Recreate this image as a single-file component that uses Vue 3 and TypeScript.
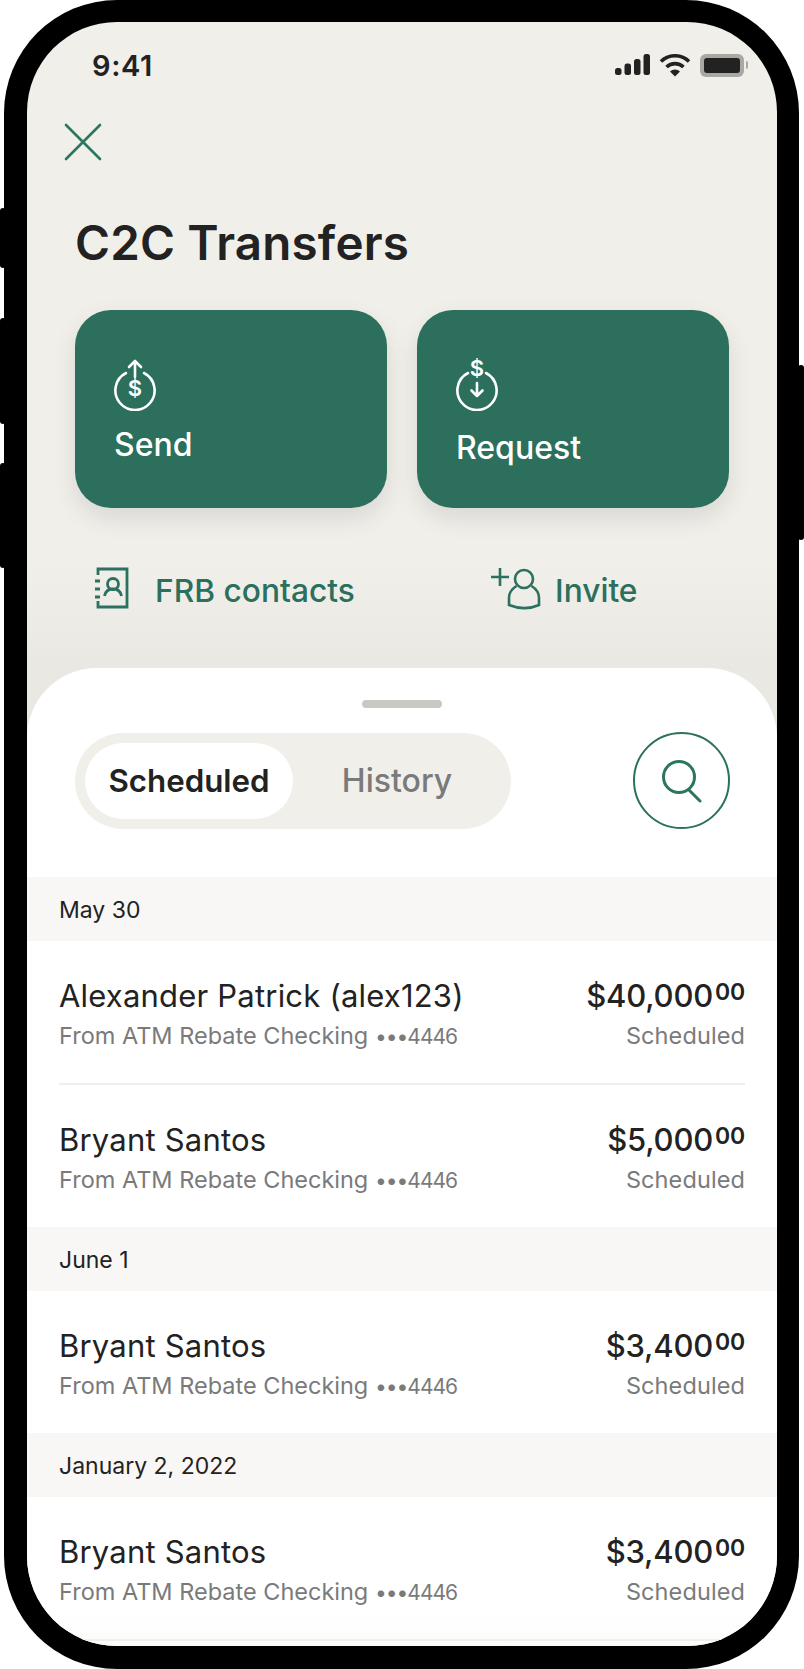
<template>
  <div class="phone">
    <i class="btn btn--mute" />
    <i class="btn btn--up" />
    <i class="btn btn--down" />
    <i class="btn btn--power" />
    <div class="screen">
      <div class="status">
        <span class="status__time">9:41</span>
        <div class="status__icons">
          <svg width="35" height="22" viewBox="0 0 35 22" fill="#222">
            <rect x="0" y="14" width="6.500" height="7" rx="2.500" />
            <rect x="9.500" y="9.500" width="6.500" height="11.500" rx="2.500" />
            <rect x="19" y="5" width="6.500" height="16" rx="2.500" />
            <rect x="28.500" y="0" width="6.500" height="21" rx="2.500" />
          </svg>
          <svg width="32" height="23" viewBox="0 0 32 23" fill="none" stroke="#222" stroke-width="3.600">
            <path d="M2 7.500a20 20 0 0 1 28 0" />
            <path d="M7.500 13a12.500 12.500 0 0 1 17 0" />
            <path d="M16 22.500l-5-5a7.200 7.200 0 0 1 10 0z" fill="#222" stroke="none" />
          </svg>
          <div class="battery"><div class="battery__fill" /></div>
        </div>
      </div>

      <svg class="close" width="38" height="38" viewBox="0 0 38 38" fill="none" stroke="#2c7560" stroke-width="2.600" stroke-linecap="round">
        <path d="M2 2l34 34M36 2L2 36" />
      </svg>

      <h1 class="title">C2C Transfers</h1>

      <div class="cards">
        <div class="card">
          <svg width="44" height="58" viewBox="0 -6 44 58" fill="none" stroke="#fff" stroke-width="2.600" stroke-linecap="round" stroke-linejoin="round">
            <path d="M13 14a19.600 19.600 0 1 0 18 0" />
            <path d="M22 2v16M16 8l6-6 6 6" />
            <text x="22" y="37" class="card__dollar">$</text>
          </svg>
          <span class="card__label card__label--send">Send</span>
        </div>
        <div class="card">
          <svg width="44" height="58" viewBox="0 -6 44 58" fill="none" stroke="#fff" stroke-width="2.600" stroke-linecap="round" stroke-linejoin="round">
            <path d="M13 14a19.600 19.600 0 1 0 18 0" />
            <path d="M22 24v13M16.500 31.500l5.500 5.500 5.500-5.500" />
            <text x="22" y="17" class="card__dollar">$</text>
          </svg>
          <span class="card__label card__label--request">Request</span>
        </div>
      </div>

      <div class="links">
        <div class="link link--contacts">
          <svg width="34" height="42" viewBox="0 0 34 42" fill="none" stroke="#2c7060" stroke-width="2.800">
            <path d="M3 8V2h29v38H3v-6" />
            <path d="M0 14h5M0 22h5M0 30h5" />
            <circle cx="18" cy="17" r="5.500" />
            <path d="M9.500 29c1-5 4-7 8.500-7s7.500 2 8.500 7" />
          </svg>
          <span>FRB contacts</span>
        </div>
        <div class="link link--invite">
          <svg width="52" height="44" viewBox="0 0 52 44" fill="none" stroke="#2c7060" stroke-width="2.600">
            <path d="M1 11h18M10 2v18" />
            <circle cx="34" cy="13" r="9" />
            <path d="M26.500 20c-5 3-7.500 7-7.500 12v7c10 4 21 4 30 0v-7c0-5-2.500-9-7.500-12" />
          </svg>
          <span>Invite</span>
        </div>
      </div>

      <div class="sheet">
        <div class="sheet__handle" />
        <div class="toolbar">
          <div class="segment">
            <span class="segment__item segment__item--active">Scheduled</span>
            <span class="segment__item">History</span>
          </div>
          <div class="search">
            <svg width="42" height="44" viewBox="0 0 42 44" fill="none" stroke="#2c7560" stroke-width="3">
              <circle cx="18" cy="18" r="15.500" />
              <path d="M28 31l11 11" stroke-linecap="round" />
            </svg>
          </div>
        </div>

        <template v-for="group in groups" :key="group.date">
          <div class="band">{{ group.date }}</div>
          <div
            v-for="row in group.rows"
            :key="row.id"
            class="row"
            :class="{ 'row--line': row.line }"
          >
            <div class="row__left">
              <div class="row__name">{{ row.name }}</div>
              <div class="row__sub">From ATM Rebate Checking <span class="row__acct">•••4446</span></div>
            </div>
            <div class="row__right">
              <div class="row__amount">{{ row.amount }}<sup>00</sup></div>
              <div class="row__sub">Scheduled</div>
            </div>
          </div>
        </template>
      </div>
      <div class="fade" />
    </div>
  </div>
</template>

<script setup lang="ts">
interface Row {
  id: number
  name: string
  amount: string
  line?: boolean
}

const groups: { date: string; rows: Row[] }[] = [
  {
    date: 'May 30',
    rows: [
      { id: 1, name: 'Alexander Patrick (alex123)', amount: '$40,000', line: true },
      { id: 2, name: 'Bryant Santos', amount: '$5,000' },
    ],
  },
  { date: 'June 1', rows: [{ id: 3, name: 'Bryant Santos', amount: '$3,400' }] },
  {
    date: 'January 2, 2022',
    rows: [{ id: 4, name: 'Bryant Santos', amount: '$3,400', line: true }],
  },
]
</script>

<style>
html,
body {
  margin: 0;
  background: #fff;
}
</style>

<style scoped>
.phone {
  position: relative;
  box-sizing: border-box;
  width: 795px;
  height: 1669px;
  margin-left: 4px;
  padding: 22px 22px 23px 23px;
  background: #000;
  border-radius: 113px;
  font-family: Inter, 'Liberation Sans', sans-serif;
  color: #222;
}

.btn {
  position: absolute;
  width: 6px;
  background: #000;
  border-radius: 4px;
}
.btn--mute { left: -4px; top: 208px; height: 60px; }
.btn--up { left: -4px; top: 318px; height: 106px; }
.btn--down { left: -4px; top: 463px; height: 105px; }
.btn--power { right: -5px; top: 365px; height: 175px; }

.screen {
  position: relative;
  display: flex;
  flex-direction: column;
  height: 100%;
  overflow: hidden;
  border-radius: 90px;
  background: linear-gradient(#f0efea 0, #f0efea 540px, #e9e8e3 646px);
}

.status {
  display: flex;
  justify-content: space-between;
  align-items: center;
  height: 26px;
  padding: 30px 33px 0 65px;
}
.status__time {
  font-size: 29px;
  font-weight: 600;
  letter-spacing: 0.6px;
}
.status__icons {
  display: flex;
  align-items: center;
  gap: 9px;
}
.battery {
  position: relative;
  box-sizing: border-box;
  width: 44px;
  height: 23px;
  padding: 4px;
  background: #a9a8a3;
  border-radius: 6px;
}
.battery::after {
  content: '';
  position: absolute;
  right: -4px;
  top: 7px;
  width: 2px;
  height: 8px;
  background: #a9a8a3;
  border-radius: 0 2px 2px 0;
}
.battery__fill {
  height: 100%;
  background: #222;
  border-radius: 3px;
}

.close {
  display: block;
  margin: 45px 0 0 37px;
}

.title {
  margin: 54px 0 0 48px;
  font-size: 47.500px;
  line-height: 56px;
  font-weight: 600;
  letter-spacing: 0.2px;
}

.cards {
  display: flex;
  gap: 30px;
  margin: 39px 48px 0;
}
.card {
  display: flex;
  flex-direction: column;
  align-items: flex-start;
  flex: 1;
  box-sizing: border-box;
  height: 198px;
  padding: 43px 0 0 38px;
  background: #2b6f5c;
  border-radius: 36px;
  box-shadow: 0 10px 24px rgba(0, 0, 0, 0.1);
  color: #fff;
}
.card svg {
  display: block;
}
.card__dollar {
  fill: #fff;
  stroke: none;
  font-size: 22px;
  font-weight: 600;
  text-anchor: middle;
}
.card__label {
  font-size: 32px;
  line-height: 36px;
  font-weight: 500;
}
.card__label--send { margin-top: 16px; margin-left: 1px; }
.card__label--request { margin-top: 19px; margin-left: 1px; }

.links {
  display: flex;
  margin: 58px 0 0;
  height: 44px;
  color: #2b6f5c;
  font-size: 31.700px;
  font-weight: 500;
}
.link {
  display: flex;
  align-items: center;
}
.link--contacts {
  gap: 26px;
  margin-left: 68px;
  width: 395px;
}
.link--invite {
  gap: 13px;
}
.link span {
  position: relative;
  top: 3px;
  line-height: 44px;
}

.sheet {
  flex: 1;
  margin-top: 58px;
  background: #fff;
  border-radius: 70px 70px 0 0;
  padding-top: 32px;
}
.sheet__handle {
  width: 80px;
  height: 8px;
  margin: 0 auto;
  background: #c9c8c3;
  border-radius: 4px;
}
.toolbar {
  display: flex;
  justify-content: space-between;
  align-items: center;
  margin: 24px 47px 48px 48px;
}
.segment {
  display: flex;
  align-items: center;
  box-sizing: border-box;
  width: 436px;
  height: 96px;
  padding: 0 10px;
  background: #f0efea;
  border-radius: 48px;
}
.segment__item {
  display: flex;
  justify-content: center;
  align-items: center;
  width: 208px;
  height: 76px;
  border-radius: 38px;
  font-size: 32px;
  font-weight: 500;
  color: #7a7a7a;
}
.segment__item--active {
  background: #fff;
  color: #222;
  font-size: 31.300px;
  font-weight: 600;
}
.search {
  display: flex;
  justify-content: center;
  align-items: center;
  box-sizing: border-box;
  width: 97px;
  height: 97px;
  border: 2px solid #2c7060;
  border-radius: 50%;
}

.band {
  display: flex;
  align-items: center;
  height: 64px;
  padding: 2px 0 0 32px;
  box-sizing: border-box;
  background: #f8f7f5;
  font-size: 23px;
}

.row {
  display: flex;
  justify-content: space-between;
  box-sizing: border-box;
  height: 142px;
  margin: 0 32px;
  padding-top: 35px;
}
.row--line {
  height: 144px;
  border-bottom: 2px solid #f0efea;
}
.row__right {
  text-align: right;
}
.row__name {
  font-size: 31px;
  line-height: 40px;
  letter-spacing: 0.2px;
}
.row__sub {
  margin-top: 1px;
  font-size: 23.500px;
  line-height: 38px;
  color: #7a7a7a;
}
.row__right .row__sub {
  letter-spacing: 0.1px;
}
.row__acct {
  font-size: 21px;
  letter-spacing: -1px;
}
.row__amount {
  font-size: 31px;
  line-height: 40px;
  font-weight: 500;
  letter-spacing: -0.2px;
}
.row__amount sup {
  margin-left: 2px;
  font-size: 23px;
  font-weight: 600;
  line-height: 0;
  vertical-align: 7px;
}

.fade {
  position: absolute;
  left: 0;
  right: 0;
  bottom: 0;
  height: 34px;
  background: linear-gradient(rgba(240, 239, 234, 0), rgba(240, 239, 234, 0.2));
}
</style>
